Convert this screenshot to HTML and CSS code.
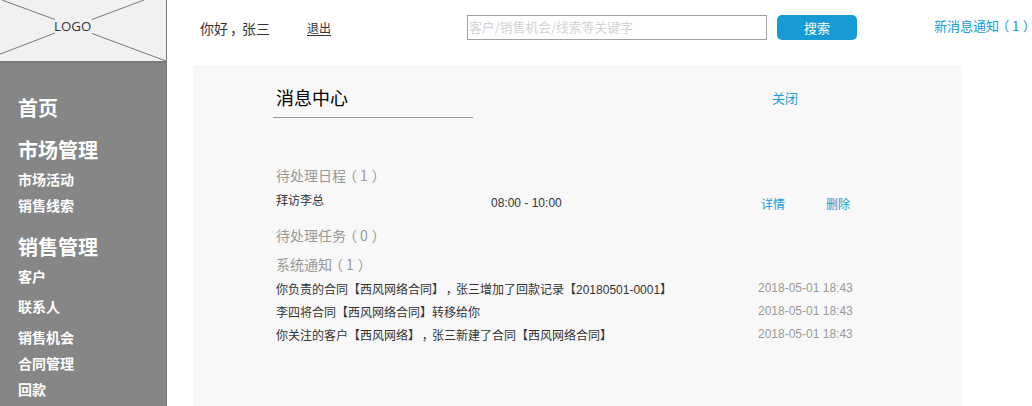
FILE: index.html
```html
<!DOCTYPE html>
<html lang="zh-CN">
<head>
<meta charset="utf-8">
<title>消息中心</title>
<link rel="stylesheet" href="styles.css">
</head>
<body>
<div class="app">
  <aside class="sidebar">
    <div class="logo">
      <svg class="logo-cross" width="166" height="61" viewBox="0 0 166 61"><path d="M2 0L55 19.5M92 19.5L144 0M-1 54.5L55 33M92 33.5L166 61" stroke="#797979" fill="none"/></svg>
      <span class="logo-text">LOGO</span>
    </div>
    <nav class="nav">
      <a class="group">首页</a>
      <a class="group">市场管理</a>
      <a class="item tight">市场活动</a>
      <a class="item">销售线索</a>
      <a class="group spaced">销售管理</a>
      <a class="item tight">客户</a>
      <a class="item loose">联系人</a>
      <a class="item looser">销售机会</a>
      <a class="item">合同管理</a>
      <a class="item">回款</a>
    </nav>
  </aside>
  <main class="main">
    <header class="topbar">
      <span class="hello">你好<span class="comma">，</span>张三</span>
      <a class="logout">退出</a>
      <div class="search"><span>客户/销售机会/线索等关键字</span></div>
      <a class="search-btn">搜索</a>
      <a class="notice">新消息通知<span class="open">（</span>1<span class="shut">）</span></a>
    </header>
    <section class="panel">
      <div class="panel-head">
        <h1 class="title">消息中心</h1>
        <a class="close">关闭</a>
      </div>
      <h2 class="section">待处理日程<span class="open">（</span>1<span class="shut">）</span></h2>
      <div class="schedule">
        <span class="subject">拜访李总</span>
        <span class="time">08:00 - 10:00</span>
        <a class="action">详情</a>
        <a class="action">删除</a>
      </div>
      <h2 class="section">待处理任务<span class="open">（</span>0<span class="shut">）</span></h2>
      <h2 class="section system">系统通知<span class="open">（</span>1<span class="shut">）</span></h2>
      <ul class="messages">
        <li><span class="message">你负责的合同【西风网络合同】<span class="comma">，</span>张三增加了回款记录【20180501-0001】</span><span class="date">2018-05-01 18:43</span></li>
        <li><span class="message">李四将合同【西风网络合同】转移给你</span><span class="date">2018-05-01 18:43</span></li>
        <li><span class="message">你关注的客户【西风网络】<span class="comma">，</span>张三新建了合同【西风网络合同】</span><span class="date">2018-05-01 18:43</span></li>
      </ul>
    </section>
  </main>
</div>
</body>
</html>
```
FILE: styles.css
```css
* { box-sizing: border-box; }
body {
  margin: 0;
  background: #fff;
  color: #333;
  font-family: "Noto Sans CJK SC", sans-serif;
  font-size: 13px;
  line-height: 20px;
  text-spacing-trim: space-all;
  white-space: nowrap;
}
.app { display: flex; height: 406px; overflow: hidden; }

.sidebar {
  width: 167px;
  flex: none;
  background: #868686;
  border-right: 1px solid #797979;
}
.logo {
  display: grid;
  height: 63px;
  background: #f1f1f1;
  border-bottom: 2px solid #797979;
}
.logo-cross, .logo-text { grid-area: 1 / 1; }
.logo-text {
  padding: 19px 0 0 54px;
  font-size: 13.3px;
  line-height: 14px;
  font-family: "Open Sans", "Noto Sans", sans-serif;
}

.nav { display: flex; flex-direction: column; padding: 18px 18px 0; color: #fff; font-weight: 700; }
.group { font-size: 20px; line-height: 30px; margin-top: 12px; }
.item { font-size: 14px; margin-top: 6px; }
.tight { margin-top: 4px; }
.spaced { margin-top: 17px; }
.loose { margin-top: 10px; }
.looser { margin-top: 11px; }

.main { flex: 1; min-width: 0; padding-left: 26px; }
.topbar { display: flex; align-items: flex-start; height: 65px; padding: 15px 0 0 7px; }

/* Half-width punctuation, spaced towards the middle of its em box. */
.comma, .open, .shut { font-feature-settings: "halt"; }
.comma { margin: 0 .36em 0 .14em; }
.open { margin: 0 .22em 0 .28em; }
.shut { margin-left: .28em; }

.hello { width: 107px; margin-top: 3px; font-size: 14px; }
.logout { width: 160px; margin-top: 3px; font-size: 12px; text-decoration: underline; text-underline-offset: 2px; }
.search {
  width: 300px;
  height: 25px;
  padding: 1px;
  border: 1px solid #a0a0a0;
  color: #d3d3d3;
  letter-spacing: -0.17px;
}
.search-btn {
  width: 80px;
  height: 25px;
  margin-left: 10px;
  border-radius: 5px;
  background: #169bd5;
  color: #fff;
  line-height: 25px;
  text-align: center;
}
.notice, .close, .action { color: #169bd5; }
.notice { margin: 1px 0 0 77px; }

.panel { width: 769px; height: 341px; padding: 18px 80px 0; background: #f8f8f8; }
.panel-head { display: flex; justify-content: space-between; padding-right: 84px; margin-bottom: 47px; }
.title {
  width: 200px;
  height: 35px;
  margin: 0;
  padding-left: 3px;
  border-bottom: 1px solid #999;
  color: #000;
  font-size: 18px;
  font-weight: 400;
  line-height: 28px;
}
.close { margin-top: 5px; }
.section { margin: 0; padding-left: 3px; color: #999; font-size: 14px; font-weight: 400; line-height: 20px; }
.schedule { display: flex; height: 40px; padding: 5px 0 0 3px; font-size: 12px; }
.schedule > * { flex: none; }
.subject { width: 215px; }
.time { width: 270px; margin-top: 3px; font-family: "Liberation Sans", Arial, sans-serif; }
.action { width: 65px; margin-top: 4px; }
.system { margin-top: 9px; }
.messages {
  margin: 5px 0 0;
  padding: 0 0 0 3px;
  list-style: none;
  font-family: "Liberation Sans", "Noto Sans CJK SC", sans-serif;
  font-size: 12px;
  line-height: 23px;
}
.messages li { display: flex; height: 23px; }
.message { width: 482px; }
.date { margin-top: -2px; color: #999; }
```
